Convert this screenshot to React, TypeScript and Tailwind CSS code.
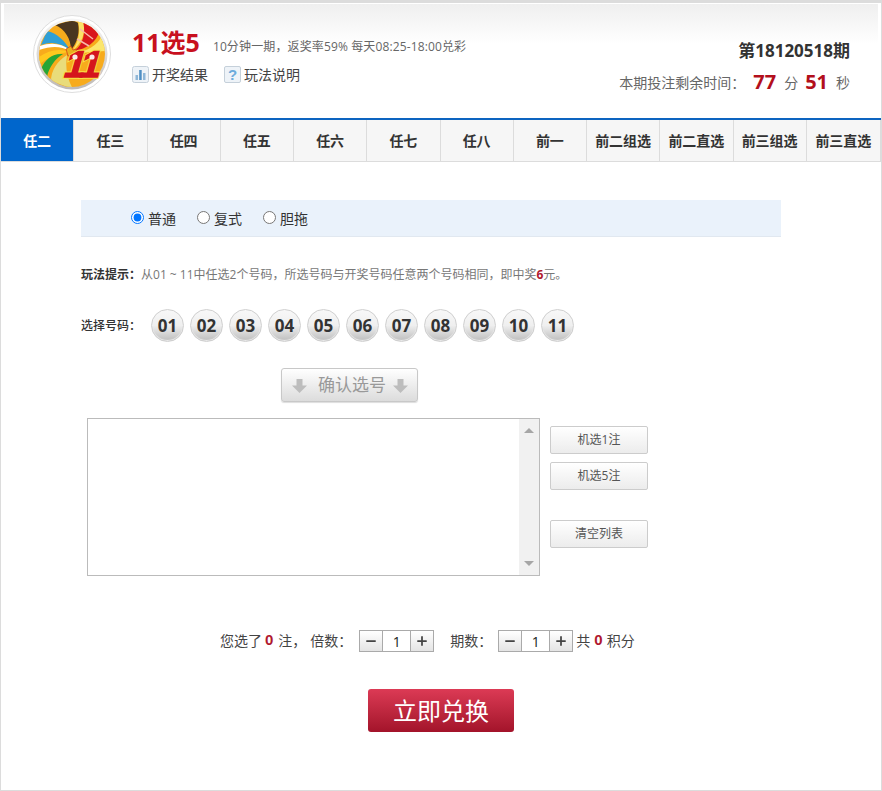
import { Minus, Plus } from 'lucide-react';

const tabs = ['任二', '任三', '任四', '任五', '任六', '任七', '任八', '前一', '前二组选', '前二直选', '前三组选', '前三直选'];
const balls = ['01', '02', '03', '04', '05', '06', '07', '08', '09', '10', '11'];
const modes = [
  { label: '普通', checked: true },
  { label: '复式', checked: false },
  { label: '胆拖', checked: false },
];

function Logo() {
  return (
    <svg width="78" height="78" viewBox="0 0 78 78" className="shrink-0">
      <defs>
        <clipPath id="disc">
          <circle cx="39" cy="39" r="33" />
        </clipPath>
        <linearGradient id="ring" x1="0" y1="0" x2="0" y2="1">
          <stop offset="0" stopColor="#f6f6f6" />
          <stop offset="0.5" stopColor="#dcdad8" />
          <stop offset="1" stopColor="#bdb9b6" />
        </linearGradient>
      </defs>
      <circle cx="39" cy="39" r="38.5" fill="#fff" stroke="#dedede" />
      <circle cx="39" cy="39" r="35.5" fill="url(#ring)" />
      <g clipPath="url(#disc)">
        <rect x="5" y="5" width="68" height="68" fill="#f7ab1c" />
        <path d="M37 35 C32 26 24 18 14 16 L8 30 C18 26 28 28 37 35Z" fill="#2f9fd6" />
        <path d="M37 35 C28 28 18 27 7 31 L6 35 C18 31 28 31 37 36Z" fill="#fff" />
        <path d="M37 37 C26 33 16 35 6 42 L6 50 C14 42 26 38 37 37Z" fill="#ffc81e" />
        <path d="M38 35 C38 24 32 14 22 10 L40 5 L45 8 C47 18 44 28 38 35Z" fill="#4a3620" />
        <path d="M39 36 C45 28 48 18 45 6 L50 6 C53 16 50 28 39 36Z" fill="#fbe26a" />
        <path d="M41 36 C50 30 53 18 50 6 L66 17 C64 26 54 34 41 36Z" fill="#d9161c" />
        <path d="M47 14 L60 24 M44 24 L56 31" stroke="#f7b7a8" strokeWidth="1.5" />
        <path d="M43 38 C54 36 65 30 68 22 L74 36 C64 36 52 38 43 38Z" fill="#fbe66c" />
        <path d="M30 39 C20 38 12 44 8 54 L14 62 C16 52 22 44 30 39Z" fill="#27a535" />
        <path d="M34 40 C24 46 18 56 18 66 L40 74 C34 64 32 52 34 40Z" fill="#e9dc7a" />
        <path d="M8 60 C24 78 54 78 72 56 L74 76 L8 76Z" fill="#e57f10" />
        <path d="M33 34 l5 -3 l2 4 l4 -1 l-3 6 l-6 1Z" fill="#e8b21c" stroke="#c8201c" strokeWidth="0.6" />
      </g>
      <g transform="translate(27 0) skewX(-16)" fontFamily="'Liberation Sans', sans-serif" fontSize="37" fontWeight="700" letterSpacing="-3">
        <text x="20" y="62" fill="#f9e04a" stroke="#f9e04a" strokeWidth="3.5">11</text>
        <text x="20" y="62" fill="#d5141c" stroke="#d5141c" strokeWidth="1.6">11</text>
      </g>
      <circle cx="42" cy="42" r="2.6" fill="#fff" opacity="0.9" />
      <circle cx="59" cy="42" r="2.6" fill="#fff" opacity="0.9" />
    </svg>
  );
}

function ChartIcon() {
  return (
    <svg width="17" height="17" viewBox="0 0 17 17" className="shrink-0">
      <rect x="0.5" y="0.5" width="16" height="16" rx="2" fill="#eef3f8" stroke="#c5d0da" />
      <rect x="3.5" y="9" width="2.5" height="5" fill="#8fb7d8" />
      <rect x="7.2" y="4" width="2.5" height="10" fill="#4f8fc4" />
      <rect x="11" y="7" width="2.5" height="7" fill="#8fb7d8" />
    </svg>
  );
}

function HelpIcon() {
  return (
    <div className="flex h-[17px] w-[17px] shrink-0 items-center justify-center rounded-[2px] border border-[#c5d0da] bg-[#eef3f8] font-['Liberation_Sans',sans-serif] text-[15px] leading-none font-bold text-[#6cabdc]">
      ?
    </div>
  );
}

function BlockArrow() {
  return (
    <svg width="15" height="15" viewBox="0 0 15 15" className="shrink-0">
      <path d="M4.5 1h6v6.5H15L7.5 15 0 7.5h4.5z" fill="#bdbdbd" />
    </svg>
  );
}

function Stepper() {
  return (
    <div className="flex h-[22px] w-[75px] border border-[#aaa] bg-white">
      <div className="flex w-[23px] items-center justify-center border-r border-[#aaa] bg-gradient-to-b from-white to-[#e4e4e4]">
        <Minus size={14} strokeWidth={3} color="#444" />
      </div>
      <div className="flex flex-1 items-center justify-center text-[14px] text-[#222]">1</div>
      <div className="flex w-[23px] items-center justify-center border-l border-[#aaa] bg-gradient-to-b from-white to-[#e4e4e4]">
        <Plus size={14} strokeWidth={3} color="#444" />
      </div>
    </div>
  );
}

function SideButton({ label, className }: { label: string; className?: string }) {
  return (
    <button className={`block h-[28px] w-[98px] rounded-[2px] border border-[#ccc] bg-gradient-to-b from-white to-[#ececec] text-[12px] text-[#555] ${className ?? ''}`}>
      {label}
    </button>
  );
}

export default function App() {
  return (
    <div className="h-[791px] w-[882px] overflow-hidden border border-t-[3px] border-[#dcdcdc] bg-white font-['Open_Sans','Noto_Sans_CJK_SC',sans-serif]">
      {/* Header */}
      <div className="mx-[3px] mt-[1px] flex h-[114px] bg-gradient-to-b from-[#efefef] via-white via-[35%] to-white">
        <div className="ml-[29px] mt-[11px]">
          <Logo />
        </div>
        <div className="ml-[21px] flex-1">
          <div className="mt-[23px] flex h-[30px] items-center">
            <span className="text-[25px] leading-none font-bold text-[#c8101e]">11选5</span>
            <span className="ml-[13px] mt-[10px] text-[12px] tracking-[0.13px] text-[#666]">10分钟一期，返奖率59% 每天08:25-18:00兑彩</span>
          </div>
          <div className="mt-[7px] flex items-center text-[14px] text-[#444]">
            <ChartIcon />
            <span className="ml-[3px]">开奖结果</span>
            <div className="ml-[16px]"><HelpIcon /></div>
            <span className="ml-[3px]">玩法说明</span>
          </div>
        </div>
        <div className="mr-[28px] flex flex-col items-end pt-[35px]">
          <div className="text-[17px] leading-[24px] font-bold text-[#333]">第18120518期</div>
          <div className="mt-[6px] flex h-[26px] items-center text-[14px] text-[#666]">
            <span>本期投注剩余时间：</span>
            <span className="ml-[8px] text-[20px] font-bold text-[#b30f1c]">77</span>
            <span className="ml-[8px]">分</span>
            <span className="ml-[7px] text-[20px] font-bold text-[#b30f1c]">51</span>
            <span className="ml-[8px]">秒</span>
          </div>
        </div>
      </div>

      {/* Tabs */}
      <div className="grid h-[44px] grid-cols-[repeat(11,73.25px)_1fr] border-t-2 border-b border-t-[#0d64c0] border-b-[#dcdcdc] bg-[#f6f6f6]">
        {tabs.map((tab, i) => (
          <div
            key={tab}
            className={`flex items-center justify-center border-r border-[#dcdcdc] text-[14px] font-bold ${i === 0 ? 'bg-[#0066cc] text-white' : 'text-[#333]'}`}
          >
            {tab}
          </div>
        ))}
      </div>

      {/* Play type */}
      <div className="ml-[80px] mt-[38px] flex h-[37px] w-[700px] items-center border-b border-[#e1e8f0] bg-[#eaf2fb] pl-[50px] text-[14px] text-[#333]">
        {modes.map((m) => (
          <label key={m.label} className="flex w-[66px] items-center">
            <input type="radio" name="mode" defaultChecked={m.checked} className="m-0 -mt-[2px] h-[13px] w-[13px]" />
            <span className="ml-[4px]">{m.label}</span>
          </label>
        ))}
      </div>

      {/* Hint */}
      <div className="mx-[80px] mt-[29px] h-[18px] text-[12px] leading-[18px] text-[#777]">
        <b className="text-[#333]">玩法提示：</b>从01 ~ 11中任选2个号码，所选号码与开奖号码任意两个号码相同，即中奖<b className="text-[#b0182e]">6</b>元。
      </div>

      {/* Balls */}
      <div className="ml-[80px] mt-[25px] flex h-[33px] items-center">
        <span className="w-[70px] text-[12px] font-medium text-[#333]">选择号码：</span>
        <div className="flex gap-[6px]">
          {balls.map((n) => (
            <div
              key={n}
              className="flex h-[33px] w-[33px] items-center justify-center rounded-full border border-[#cfcfcf] bg-gradient-to-b from-[#f8f8f8] via-[#efefef] to-[#bdbdbd] text-[17px] font-bold text-[#333] shadow-[inset_0_-1px_1px_#eee]"
            >
              {n}
            </div>
          ))}
        </div>
      </div>

      {/* Confirm */}
      <div className="mt-[26px] ml-[280px] flex h-[34px] w-[137px] items-center rounded-[3px] border border-[#c8c8c8] bg-gradient-to-b from-white to-[#dcdcdc] pl-[10px] text-[17px] text-[#999] shadow-[0_1px_1px_#ddd]">
        <BlockArrow />
        <span className="ml-[11px]">确认选号</span>
        <div className="ml-[7px]"><BlockArrow /></div>
      </div>

      {/* List and side buttons */}
      <div className="mt-[16px] ml-[86px] flex">
        <div className="flex h-[158px] w-[453px] justify-end border border-[#bbb] bg-white">
          <div className="flex w-[20px] flex-col items-center justify-between bg-[#f1f1f1] py-[9px]">
            <div className="h-0 w-0 border-x-[5px] border-b-[5px] border-x-transparent border-b-[#a6a6a6]" />
            <div className="h-0 w-0 border-x-[5px] border-t-[5px] border-x-transparent border-t-[#a6a6a6]" />
          </div>
        </div>
        <div className="ml-[10px] pt-[8px]">
          <SideButton label="机选1注" />
          <SideButton label="机选5注" className="mt-[8px]" />
          <SideButton label="清空列表" className="mt-[30px]" />
        </div>
      </div>

      {/* Totals */}
      <div className="mt-[54px] ml-[219px] flex h-[22px] items-center text-[14px] text-[#444]">
        <span className="mb-[2px]">您选了</span>
        <b className="mb-[2px] ml-[3px] mr-[5px] font-['Liberation_Sans',sans-serif] text-[15px] text-[#b0182e]">0</b>
        <span className="mb-[2px]">注，</span>
        <span className="mb-[2px] ml-[4px]">倍数：</span>
        <div className="ml-[7px]"><Stepper /></div>
        <span className="mb-[2px] ml-[16px]">期数：</span>
        <div className="ml-[6px]"><Stepper /></div>
        <span className="mb-[2px] ml-[3px]">共</span>
        <b className="mx-[4px] mb-[2px] font-['Liberation_Sans',sans-serif] text-[15px] text-[#b0182e]">0</b>
        <span className="mb-[2px]">积分</span>
      </div>

      {/* Submit */}
      <button className="mt-[37px] ml-[367px] block h-[43px] w-[146px] rounded-[3px] bg-gradient-to-b from-[#dc3a55] to-[#a3132a] text-[24px] text-white">
        立即兑换
      </button>
    </div>
  );
}
